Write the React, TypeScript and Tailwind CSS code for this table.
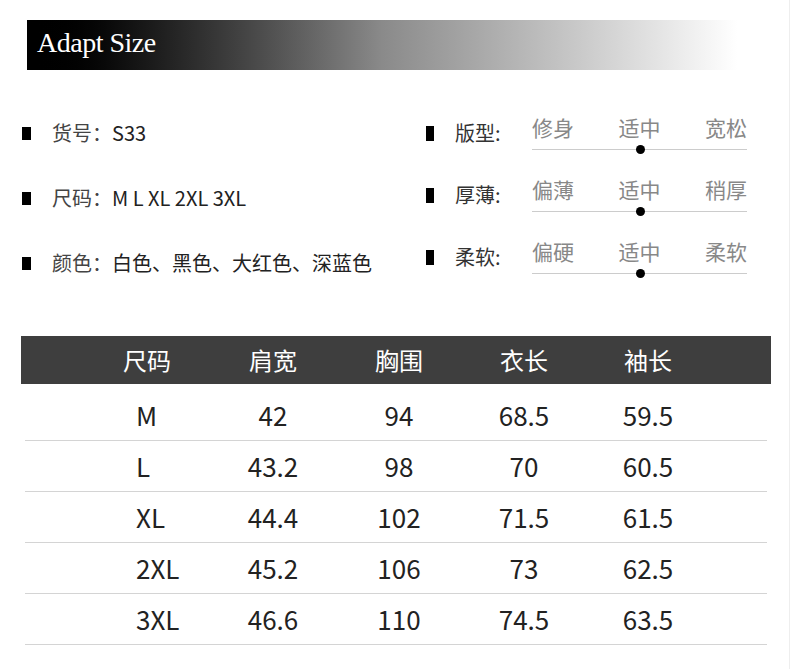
import React from 'react';

const cjk = '"Noto Sans CJK SC", "Noto Sans", sans-serif';

const infoLeft = [
  { label: '货号：', value: 'S33' },
  { label: '尺码：', value: 'M L XL 2XL 3XL' },
  { label: '颜色：', value: '白色、黑色、大红色、深蓝色' },
];

const scales = [
  { label: '版型:', options: ['修身', '适中', '宽松'] },
  { label: '厚薄:', options: ['偏薄', '适中', '稍厚'] },
  { label: '柔软:', options: ['偏硬', '适中', '柔软'] },
];

const headers = ['尺码', '肩宽', '胸围', '衣长', '袖长'];

const rows = [
  ['M', '42', '94', '68.5', '59.5'],
  ['L', '43.2', '98', '70', '60.5'],
  ['XL', '44.4', '102', '71.5', '61.5'],
  ['2XL', '45.2', '106', '73', '62.5'],
  ['3XL', '46.6', '110', '74.5', '63.5'],
];

const cols = 'grid grid-cols-[126px_126px_126px_124px_124px] pl-[63px]';

export default function App() {
  return (
    <div
      className="w-[790px] h-[669px] bg-white border-r border-[#eeeeee] overflow-hidden"
      style={{ fontFamily: cjk }}
    >
      {/* Title bar */}
      <div className="pt-[20px] pl-[27px]">
        <div className="h-[50px] w-[710px] bg-gradient-to-r from-black via-[#8a8a8a] to-white flex items-center pl-[10px]">
          <span
            className="text-white text-[28px] leading-none -mt-[4px] tracking-[-0.5px]"
            style={{ fontFamily: '"Liberation Serif", serif' }}
          >
            Adapt Size
          </span>
        </div>
      </div>

      {/* Product info */}
      <div className="flex">
        <div className="w-[404px] pl-[22px] pt-[53px] flex flex-col gap-[45px]">
          {infoLeft.map((r) => (
            <div key={r.label} className="h-[20px] flex items-center">
              <div className="w-[9px] h-[13px] bg-black" />
              <span className="ml-[21px] text-[20px] leading-none text-[#444]">{r.label}</span>
              <span className="text-[20px] leading-none text-[#222]">{r.value}</span>
            </div>
          ))}
        </div>

        <div className="pl-[22px] pt-[46px] flex flex-col gap-[28px]">
          {scales.map((s) => (
            <div key={s.label} className="flex items-start">
              <div className="flex items-center h-[22px] mt-[6px] w-[106px]">
                <div className="w-[8px] h-[15px] bg-black" />
                <span className="ml-[21px] text-[20px] leading-none text-[#333]">{s.label}</span>
              </div>
              <div className="w-[215px] flex flex-col">
                <div className="flex justify-between h-[22px] items-center text-[21px] leading-none text-[#888]">
                  {s.options.map((o, i) => (
                    <span key={i}>{o}</span>
                  ))}
                </div>
                <div className="relative mt-[11px] h-px bg-[#cccccc]">
                  <div className="absolute left-[104px] -top-[4px] w-[9px] h-[9px] rounded-full bg-black" />
                </div>
              </div>
            </div>
          ))}
        </div>
      </div>

      {/* Size table */}
      <div className="mt-[62px] ml-[21px] w-[750px]">
        <div className={`${cols} h-[48px] bg-[#3e3e3e] items-center text-white text-[24px] leading-none`}>
          {headers.map((h) => (
            <div key={h} className="text-center">{h}</div>
          ))}
        </div>
        <div className="pt-[6px]">
          {rows.map((r) => (
            <div key={r[0]} className="mx-[4px] border-b border-[#d4d4d4]">
              <div className={`${cols} -ml-[4px] h-[50px] items-center text-[26px] leading-none text-[#222]`}>
                {r.map((c, i) => (
                  <div key={i} className={i === 0 ? 'pl-[52px]' : 'text-center'}>
                    {c}
                  </div>
                ))}
              </div>
            </div>
          ))}
        </div>
      </div>
    </div>
  );
}
